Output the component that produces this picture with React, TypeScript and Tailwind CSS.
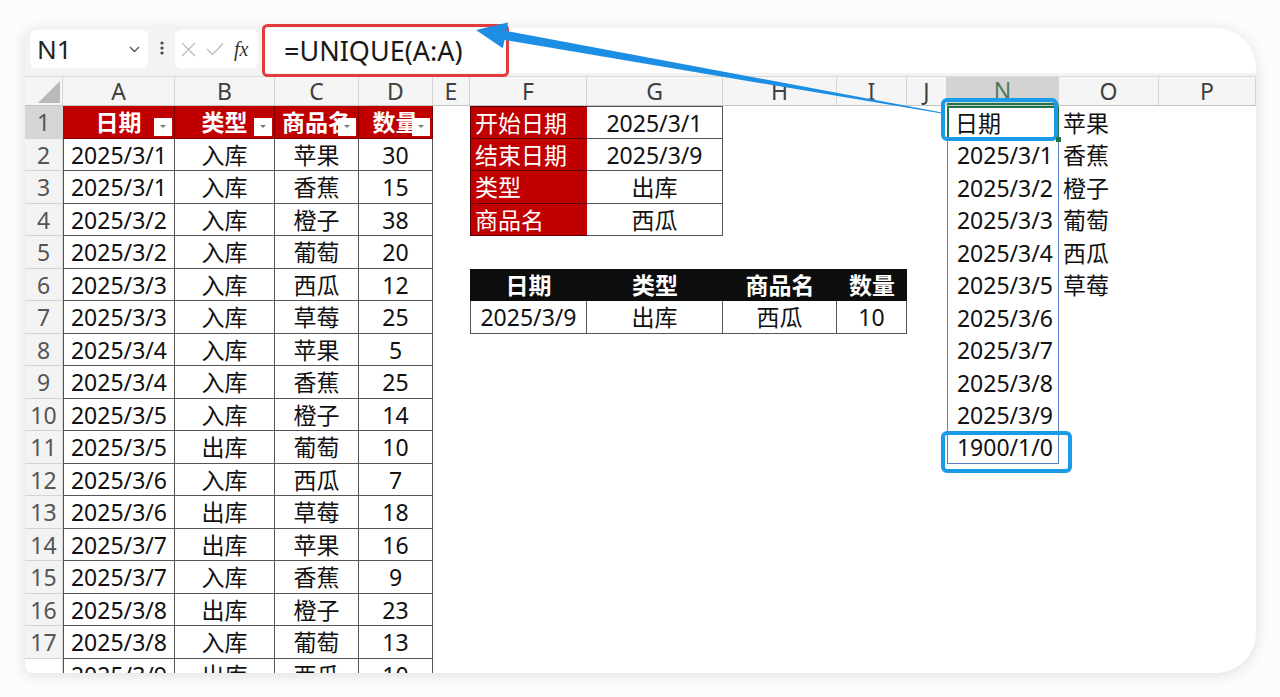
import React from "react";

const COLS =
  "grid grid-cols-[38px_112px_100px_84px_74px_37px_117px_136px_114px_70px_40px_112px_100px_1fr]";

const letters = ["A", "B", "C", "D", "E", "F", "G", "H", "I", "J", "N", "O", "P"];

const stock = [
  ["2025/3/1", "入库", "苹果", "30"],
  ["2025/3/1", "入库", "香蕉", "15"],
  ["2025/3/2", "入库", "橙子", "38"],
  ["2025/3/2", "入库", "葡萄", "20"],
  ["2025/3/3", "入库", "西瓜", "12"],
  ["2025/3/3", "入库", "草莓", "25"],
  ["2025/3/4", "入库", "苹果", "5"],
  ["2025/3/4", "入库", "香蕉", "25"],
  ["2025/3/5", "入库", "橙子", "14"],
  ["2025/3/5", "出库", "葡萄", "10"],
  ["2025/3/6", "入库", "西瓜", "7"],
  ["2025/3/6", "出库", "草莓", "18"],
  ["2025/3/7", "出库", "苹果", "16"],
  ["2025/3/7", "入库", "香蕉", "9"],
  ["2025/3/8", "出库", "橙子", "23"],
  ["2025/3/8", "入库", "葡萄", "13"],
  ["2025/3/9", "出库", "西瓜", "10"],
];

const criteria = [
  ["开始日期", "2025/3/1"],
  ["结束日期", "2025/3/9"],
  ["类型", "出库"],
  ["商品名", "西瓜"],
];

const resultHead = ["日期", "类型", "商品名", "数量"];
const resultRow = ["2025/3/9", "出库", "西瓜", "10"];

const unique = [
  "日期",
  "2025/3/1",
  "2025/3/2",
  "2025/3/3",
  "2025/3/4",
  "2025/3/5",
  "2025/3/6",
  "2025/3/7",
  "2025/3/8",
  "2025/3/9",
  "1900/1/0",
];
const fruits = ["苹果", "香蕉", "橙子", "葡萄", "西瓜", "草莓"];

function FilterBtn() {
  return (
    <div className="absolute right-[2px] bottom-[2px] w-[18px] h-[18px] bg-white flex items-center justify-center">
      <svg width="8" height="5" viewBox="0 0 8 5">
        <path d="M1 1 L4 4 L7 1 Z" fill="#7a7a7a" />
      </svg>
    </div>
  );
}

const empty = (k: string) => <div key={k} />;

function rowCells(r: number) {
  const cells: React.ReactNode[] = [];

  cells.push(
    <div
      key="rh"
      className={`flex items-center justify-center border-r border-b border-[#d4d4d4] text-[#555] ${
        r === 1 ? "bg-[#d6d6d6]" : r === 18 ? "bg-white" : "bg-[#f3f3f3]"
      }`}
    >
      {r < 18 ? r : ""}
    </div>
  );

  // A-D source table
  for (let c = 0; c < 4; c++) {
    if (r === 1) {
      const head = ["日期", "类型", "商品名", "数量"][c];
      cells.push(
        <div
          key={"t" + c}
          className="relative flex items-center justify-center overflow-hidden bg-[#c00000] text-white font-bold border-r border-b border-[#7a0000]"
        >
          {head}
          <FilterBtn />
        </div>
      );
    } else {
      cells.push(
        <div
          key={"t" + c}
          className={`flex items-center justify-center bg-white border-r border-b border-[#555] ${
            c === 0 ? "border-l" : ""
          }`}
        >
          {stock[r - 2][c]}
        </div>
      );
    }
  }

  cells.push(empty("e"));

  // F-I
  if (r <= 4) {
    cells.push(
      <div
        key="f"
        className={`flex items-center pl-[4px] bg-[#c00000] text-white border-l border-b border-[#5a0000] ${
          r === 1 ? "border-t" : ""
        }`}
      >
        {criteria[r - 1][0]}
      </div>
    );
    cells.push(
      <div
        key="g"
        className={`flex items-center justify-center bg-white border-r border-b border-[#555] ${
          r === 1 ? "border-t" : ""
        }`}
      >
        {criteria[r - 1][1]}
      </div>
    );
    cells.push(empty("h"), empty("i"));
  } else if (r === 6) {
    resultHead.forEach((t, i) =>
      cells.push(
        <div
          key={"rh" + i}
          className="flex items-center justify-center bg-[#0d0d0d] text-white font-bold"
        >
          {t}
        </div>
      )
    );
  } else if (r === 7) {
    resultRow.forEach((t, i) =>
      cells.push(
        <div
          key={"rr" + i}
          className={`flex items-center justify-center bg-white border-r border-b border-[#555] ${
            i === 0 ? "border-l" : ""
          }`}
        >
          {t}
        </div>
      )
    );
  } else {
    cells.push(empty("f"), empty("g"), empty("h"), empty("i"));
  }

  cells.push(empty("j"));

  // N spill range
  if (r <= 11) {
    cells.push(
      <div
        key="n"
        className={`flex items-center border-l border-r border-[#5a7fc9] ${
          r === 1 ? "pl-[7px] outline-2 outline-[#217346] -outline-offset-2" : "justify-end pr-[5px]"
        } ${r === 11 ? "border-b" : ""}`}
      >
        {unique[r - 1]}
      </div>
    );
  } else {
    cells.push(empty("n"));
  }

  cells.push(
    <div key="o" className="flex items-center pl-[4px]">
      {r <= 6 ? fruits[r - 1] : ""}
    </div>
  );
  cells.push(empty("p"));
  return cells;
}

export default function App() {
  const rows = Array.from({ length: 18 }, (_, i) => i + 1);
  return (
    <div className="relative w-[1280px] h-[697px] overflow-hidden bg-[#fcfcfc] font-['Noto_Sans','Noto_Sans_CJK_SC',sans-serif] text-[#111]">
      <div className="pt-[28px] pl-[25px] pr-[24px]">
        <div className="h-[645px] bg-white rounded-tl-[10px] rounded-bl-[8px] rounded-r-[40px] overflow-hidden shadow-[0_2px_14px_rgba(0,0,0,0.12)]">
          {/* formula bar */}
          <div className="h-[49px] flex items-start bg-[#f3f3f3] border-b border-[#d9d9d9]">
            <div className="mt-[2px] ml-[5px] w-[118px] h-[38px] bg-white rounded-[6px] flex items-center justify-between pl-[7px] pr-[8px]">
              <span className="text-[26px] leading-none text-[#222]">N1</span>
              <svg width="11" height="7" viewBox="0 0 11 7">
                <path d="M1 1 L5.5 5.5 L10 1" fill="none" stroke="#555" strokeWidth="1.3" />
              </svg>
            </div>
            <div className="w-[27px] h-[40px] flex items-center justify-center">
              <svg width="4" height="14" viewBox="0 0 4 14">
                <circle cx="2" cy="2" r="1.6" fill="#444" />
                <circle cx="2" cy="7" r="1.6" fill="#444" />
                <circle cx="2" cy="12" r="1.6" fill="#444" />
              </svg>
            </div>
            <div className="mt-[2px] w-[83px] h-[38px] bg-white rounded-[6px] flex items-center pl-[6px] gap-[10px]">
              <svg width="15" height="15" viewBox="0 0 15 15">
                <path d="M1 1 L14 14 M14 1 L1 14" stroke="#bdbdbd" strokeWidth="1.4" />
              </svg>
              <svg width="18" height="14" viewBox="0 0 18 14">
                <path d="M1 7 L6.5 12.5 L17 1.5" fill="none" stroke="#bdbdbd" strokeWidth="1.4" />
              </svg>
              <span className="font-['Liberation_Serif',serif] italic text-[20px] leading-none text-[#333]">
                fx
              </span>
            </div>
            <div className="ml-[4px] flex-1 h-[45px] bg-white flex items-center pl-[22px]">
              <span className="text-[27px] leading-none text-[#1a1a1a]">=UNIQUE(A:A)</span>
            </div>
          </div>

          {/* column headers */}
          <div className={`${COLS} h-[29px] bg-[#f5f5f5] border-b border-[#c4c4c4] text-[23px] text-[#404040]`}>
            <div className="relative border-r border-[#d4d4d4]">
              <svg className="absolute right-[2px] bottom-[2px]" width="22" height="22" viewBox="0 0 22 22">
                <path d="M22 0 L22 22 L0 22 Z" fill="#b9b9b9" />
              </svg>
            </div>
            {letters.map((l) => (
              <div
                key={l}
                className={`flex items-center justify-center leading-none border-r border-[#d4d4d4] ${
                  l === "N" ? "bg-[#d3d3d3] text-[#4d7a5c] border-b-2 border-b-[#217346]" : ""
                }`}
              >
                {l}
              </div>
            ))}
          </div>

          {/* grid rows */}
          <div className="text-[23px] leading-none">
            {rows.map((r) => (
              <div key={r} className={`${COLS} h-[32.5px] [&>div]:pt-[2px]`}>
                {rowCells(r)}
              </div>
            ))}
          </div>
        </div>
      </div>

      {/* annotations */}
      <svg className="absolute inset-0 pointer-events-none" width="1280" height="697" viewBox="0 0 1280 697">
        <rect x="263.5" y="25.5" width="244" height="50" rx="4" fill="none" stroke="#e53a3d" strokeWidth="3" />
        <polygon
          points="476,30 508,22.5 506.4,31 942.1,112.4 941.9,113.6 504.6,40 502.8,48.2"
          fill="#1c8fe4"
        />
        <rect x="943" y="100" width="113" height="39" rx="4" fill="none" stroke="#1a9be8" strokeWidth="4" />
        <rect x="1056" y="137" width="5" height="5" fill="#217346" />
        <rect x="943" y="433" width="127" height="38" rx="4" fill="none" stroke="#1a9be8" strokeWidth="4" />
      </svg>
    </div>
  );
}
